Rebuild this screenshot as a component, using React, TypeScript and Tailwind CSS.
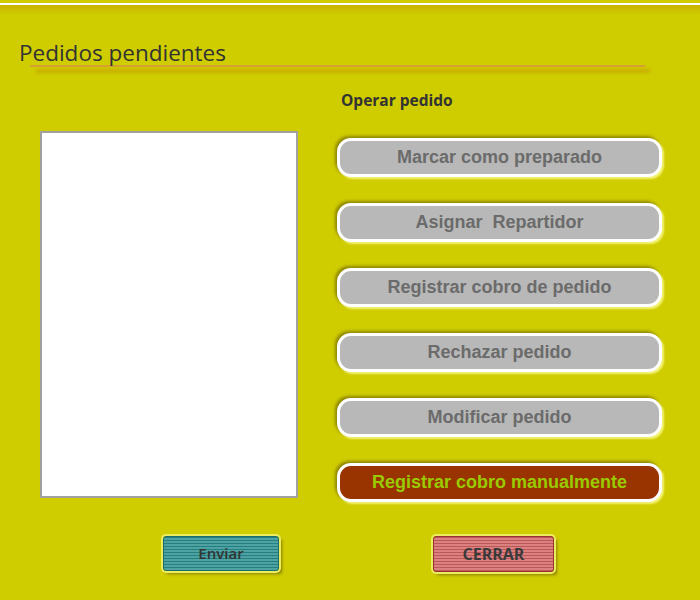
const buttons = [
  "Marcar como preparado",
  "Asignar\u00a0 Repartidor",
  "Registrar cobro de pedido",
  "Rechazar pedido",
  "Modificar pedido",
];

function ActionButton({ label, danger }: { label: string; danger?: boolean }) {
  return (
    <button
      className={
        danger
          ? "h-[39px] w-full rounded-[14px] border-[3px] border-white bg-[#993300] text-[18px] font-bold text-[#99cc00] shadow-[-2px_-2px_3px_rgba(90,80,0,0.55),2px_2px_2px_rgba(255,255,150,0.8)]"
          : "h-[39px] w-full rounded-[14px] border-[3px] border-white bg-[#b8b8b8] text-[18px] font-bold text-[#6b6b6b] shadow-[-2px_-2px_3px_rgba(90,80,0,0.55),2px_2px_2px_rgba(255,255,150,0.8)]"
      }
      style={{ fontFamily: '"Liberation Sans", Arial, sans-serif' }}
    >
      {label}
    </button>
  );
}

export default function App() {
  return (
    <div
      className="relative h-[600px] w-[700px] overflow-hidden bg-[#cfcc00]"
      style={{ fontFamily: '"Open Sans", sans-serif' }}
    >
      <div className="h-[3px]" />
      <div className="h-[2px] bg-white" />
      <div className="h-[10px] bg-[linear-gradient(to_bottom,#c9b300,#cfcc00)]" />

      <div className="pl-[19px] pt-[25px] text-[22.5px] leading-[25px] text-[#333]">
        Pedidos pendientes
      </div>
      <div className="ml-[30px] h-[2px] w-[615px] bg-[#d6a030]" />
      <div className="ml-[36px] mt-[2px] h-[4px] w-[614px] bg-[#c9b000] blur-[1.5px]" />

      <div className="flex pl-[40px] pt-[17px]">
        <div className="mt-[41px] h-[367px] w-[258px] border-2 border-[#a0a0a0] bg-white" />
        <div className="ml-[39px] flex w-[325px] flex-col">
          <div className="pl-[4px] text-[15.5px] font-bold leading-[20px] text-[#333]">
            Operar pedido
          </div>
          <div className="mt-[28px] flex flex-col gap-[26px]">
            {buttons.map((b) => (
              <ActionButton key={b} label={b} />
            ))}
            <ActionButton label="Registrar cobro manualmente" danger />
          </div>
        </div>
      </div>

      <div className="mt-[34px] flex">
        <button className="ml-[163px] h-[35px] w-[116px] rounded-[3px] border border-[#1d6c6c] bg-[repeating-linear-gradient(to_bottom,#257f80_0px,#257f80_1px,#4ea2a2_1px,#4ea2a2_3px)] text-[15px] font-semibold text-[#333] shadow-[0_0_0_2px_#ecec60,3px_3px_3px_rgba(90,80,0,0.6)]">
          Enviar
        </button>
        <button className="ml-[154px] h-[36px] w-[121px] rounded-[3px] border border-[#9a3030] bg-[repeating-linear-gradient(to_bottom,#b85858_0px,#b85858_1px,#dc8080_1px,#dc8080_3px)] text-[16px] font-bold text-[#3a3a3a] shadow-[0_0_0_2px_#ecec60,3px_3px_3px_rgba(90,80,0,0.6)]">
          CERRAR
        </button>
      </div>
    </div>
  );
}
